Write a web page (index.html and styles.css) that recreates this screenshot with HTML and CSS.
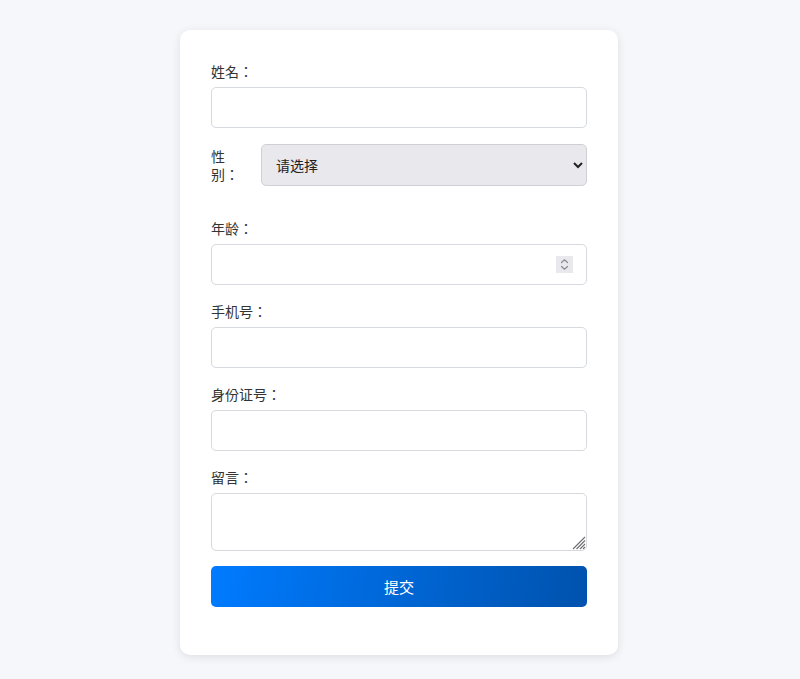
FILE: index.html
```html
<!DOCTYPE html>
<html>
<head>
<meta charset="utf-8">
<title>表单</title>
<link rel="stylesheet" href="styles.css">
</head>
<body>
<div class="page">
  <form class="card">
    <div class="group">
      <label class="label">姓名：</label>
      <input class="field" type="text">
    </div>
    <div class="group row">
      <label class="label side">性别：</label>
      <select class="field select">
        <option>请选择</option>
        <option>男</option>
        <option>女</option>
      </select>
    </div>
    <div class="group">
      <label class="label">年龄：</label>
      <div class="wrap">
        <input class="field num" type="number">
        <span class="spin" aria-hidden="true">
          <svg width="17" height="17" viewBox="0 0 17 17">
            <path d="M5.5 6.5 L8.5 3.8 L11.5 6.5" fill="none" stroke="#8b8b96" stroke-width="1.2" stroke-linecap="round" stroke-linejoin="round"/>
            <path d="M5.5 10.5 L8.5 13.2 L11.5 10.5" fill="none" stroke="#8b8b96" stroke-width="1.2" stroke-linecap="round" stroke-linejoin="round"/>
          </svg>
        </span>
      </div>
    </div>
    <div class="group">
      <label class="label">手机号：</label>
      <input class="field" type="text">
    </div>
    <div class="group">
      <label class="label">身份证号：</label>
      <input class="field" type="text">
    </div>
    <div class="group last">
      <label class="label">留言：</label>
      <div class="wrap">
        <textarea class="field area"></textarea>
        <span class="grip" aria-hidden="true">
          <svg width="15" height="15" viewBox="0 0 15 15">
            <path d="M2 14 L14 2 M5.5 14 L14 5.5 M9 14 L14 9 M12 14 L14 12" stroke="#6f6f6f" stroke-width="1.1" fill="none"/>
          </svg>
        </span>
      </div>
    </div>
    <button class="submit" type="button">提交</button>
  </form>
</div>
</body>
</html>
```
FILE: styles.css
```css
html, body {
  margin: 0;
  padding: 0;
  background: #f5f7fa;
  font-family: "Noto Sans CJK JP", "Noto Sans", sans-serif;
  color: #333;
}
.page {
  display: flex;
  justify-content: center;
  padding: 30px 2px 24px 0;
}
.card {
  width: 438px;
  box-sizing: border-box;
  background: #fff;
  border-radius: 10px;
  box-shadow: 0 2px 10px rgba(0, 0, 0, 0.1);
  padding: 31px 31px 48px 31px;
}
.group {
  margin-bottom: 16px;
}
.group.last {
  margin-bottom: 15px;
}
.label {
  display: block;
  font-size: 14px;
  line-height: 20px;
  margin-bottom: 6px;
  color: #333;
}
.wrap {
  position: relative;
}
.field {
  display: block;
  width: 100%;
  box-sizing: border-box;
  height: 41px;
  border: 1px solid #d6d9de;
  border-radius: 5px;
  padding: 0 12px;
  font-size: 14px;
  font-family: inherit;
  background: #fff;
  margin: 0;
}
.num {
  -moz-appearance: textfield;
}
.num::-webkit-inner-spin-button,
.num::-webkit-outer-spin-button {
  -webkit-appearance: none;
  margin: 0;
}
.spin {
  position: absolute;
  right: 14px;
  top: 12px;
  width: 17px;
  height: 17px;
  background: #e9e9ed;
  display: flex;
  pointer-events: none;
}
.grip {
  position: absolute;
  right: 1px;
  bottom: 1px;
  width: 15px;
  height: 15px;
  background: #fff;
  display: flex;
  pointer-events: none;
  border-bottom-right-radius: 4px;
}
.row {
  display: flex;
  align-items: center;
  margin-bottom: 32px;
}
.label.side {
  width: 30px;
  flex: 0 0 30px;
  margin: 0 20px 0 0;
  line-height: 18px;
}
.select {
  flex: 1;
  height: 42px;
  background: #e9e8ed;
  border-color: #cfd0d6;
  color: #222;
  padding: 0 10px;
}
.area {
  height: 58px;
  padding: 8px 12px;
  resize: vertical;
}
.submit {
  display: block;
  width: 100%;
  height: 41px;
  border: none;
  border-radius: 5px;
  background: linear-gradient(100deg, #007bff 0%, #0052ad 100%);
  color: #fff;
  font-size: 15px;
  font-family: inherit;
  cursor: pointer;
}
```
